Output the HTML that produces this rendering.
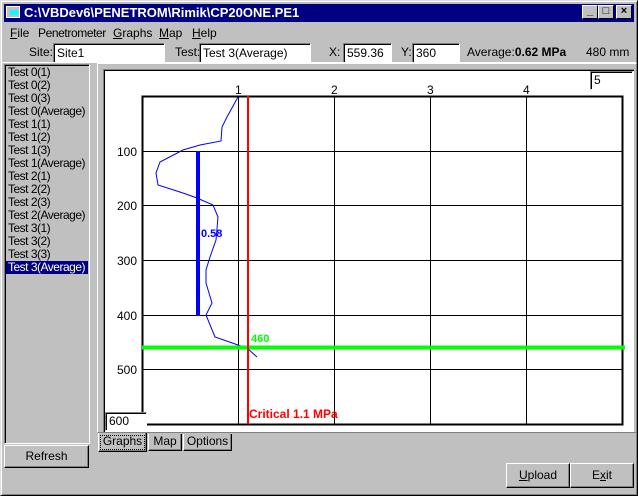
<!DOCTYPE html>
<html><head><style>
*{margin:0;padding:0;box-sizing:border-box}
body{width:638px;height:496px;background:#c0c0c0;font-family:"Liberation Sans",sans-serif;font-size:11px;position:relative;overflow:hidden;color:#000;white-space:nowrap}
.a{position:absolute}
.sunk{border-top:1px solid #808080;border-left:1px solid #808080;border-right:1px solid #fff;border-bottom:1px solid #fff;background:#fff;box-shadow:inset 1px 1px 0 #000;font-size:12px}
.btn{background:#c0c0c0;border-top:1px solid #fff;border-left:1px solid #fff;border-right:1px solid #000;border-bottom:1px solid #000;box-shadow:inset -1px -1px 0 #808080;text-align:center;font-size:12px}
.tb{width:16px;height:14px;top:5px;background:#c0c0c0;border-top:1px solid #fff;border-left:1px solid #fff;border-right:1px solid #000;border-bottom:1px solid #000;font-size:11px;line-height:11px;text-align:center;font-weight:bold}
.li{position:absolute;left:3px;height:13px;line-height:13px;font-size:12px;letter-spacing:-0.5px}
</style></head><body>
<div class="a" style="left:0;top:0;width:638px;height:496px;border-top:1px solid #dfdfdf;border-left:1px solid #dfdfdf;border-right:1px solid #000;border-bottom:1px solid #000;box-shadow:inset 1px 1px 0 #fff,inset -1px -1px 0 #808080"></div>
<div class="a" style="left:4px;top:4px;width:630px;height:18px;background:#000080"></div>
<div class="a" style="left:6px;top:6px;width:14px;height:12px;background:#c0c0c0;border:1px solid #fff"><div style="margin:3px 0 0 3px;width:8px;height:5px;background:#0ff"></div></div>
<div class="a" style="left:24px;top:5px;color:#fff;font-weight:bold;font-size:13px">C:\VBDev6\PENETROM\Rimik\CP20ONE.PE1</div>
<div class="a tb" style="left:582px">_</div><div class="a tb" style="left:598px">□</div><div class="a tb" style="left:616px">×</div>
<div class="a" style="left:10px;top:26px;font-size:12px"><u>F</u>ile</div>
<div class="a" style="left:38px;top:26px;font-size:12px;letter-spacing:-0.4px">Penetrometer</div>
<div class="a" style="left:113px;top:26px;font-size:12px"><u>G</u>raphs</div>
<div class="a" style="left:159px;top:26px;font-size:12px"><u>M</u>ap</div>
<div class="a" style="left:192px;top:26px;font-size:12px"><u>H</u>elp</div>
<div class="a" style="left:29px;top:45px;font-size:12px">Site:</div>
<div class="a sunk" style="left:53px;top:43px;width:112px;height:20px;padding:2px 3px">Site1</div>
<div class="a" style="left:175px;top:45px;font-size:12px">Test:</div>
<div class="a sunk" style="left:199px;top:43px;width:112px;height:20px;padding:2px 3px">Test 3(Average)</div>
<div class="a" style="left:329px;top:45px;font-size:12px">X:</div>
<div class="a sunk" style="left:343px;top:43px;width:49px;height:20px;padding:2px 3px">559.36</div>
<div class="a" style="left:401px;top:45px;font-size:12px">Y:</div>
<div class="a sunk" style="left:412px;top:43px;width:48px;height:20px;padding:2px 3px">360</div>
<div class="a" style="left:467px;top:45px;font-size:12px">Average:<b>0.62 MPa</b></div>
<div class="a" style="left:586px;top:45px;font-size:12px">480 mm</div>
<div class="a" style="left:2px;top:62px;width:634px;height:1px;background:#808080;border-bottom:1px solid #fff"></div>
<div class="a" style="left:4px;top:64px;width:86px;height:380px;border-top:1px solid #808080;border-left:1px solid #808080;border-right:1px solid #fff;border-bottom:1px solid #fff;box-shadow:inset 1px 1px 0 #000;overflow:hidden">
<div class="li" style="top:1px">Test 0(1)</div><div class="li" style="top:14px">Test 0(2)</div><div class="li" style="top:27px">Test 0(3)</div><div class="li" style="top:40px">Test 0(Average)</div>
<div class="li" style="top:53px">Test 1(1)</div><div class="li" style="top:66px">Test 1(2)</div><div class="li" style="top:79px">Test 1(3)</div><div class="li" style="top:92px">Test 1(Average)</div>
<div class="li" style="top:105px">Test 2(1)</div><div class="li" style="top:118px">Test 2(2)</div><div class="li" style="top:131px">Test 2(3)</div><div class="li" style="top:144px">Test 2(Average)</div>
<div class="li" style="top:157px">Test 3(1)</div><div class="li" style="top:170px">Test 3(2)</div><div class="li" style="top:183px">Test 3(3)</div>
<div class="li" style="top:196px;left:1px;padding-left:2px;width:82px;background:#000080;color:#fff">Test 3(Average)</div>
</div>
<div class="a btn" style="left:4px;top:445px;width:85px;height:23px;line-height:21px">Refresh</div>
<div class="a" style="left:97px;top:63px;width:540px;height:370px;border-top:1px solid #fff;border-left:1px solid #fff;border-right:1px solid #808080;border-bottom:1px solid #808080"></div>
<div class="a" style="left:103px;top:69px;width:531px;height:363px;background:#fff;border-top:1px solid #808080;border-left:1px solid #808080;box-shadow:inset 1px 1px 0 #000"></div>
<svg class="a" style="left:0;top:0" width="638" height="496">
<g stroke="#000" stroke-width="1" shape-rendering="crispEdges">
<line x1="238.5" y1="96" x2="238.5" y2="424"/><line x1="334.5" y1="96" x2="334.5" y2="424"/><line x1="430.5" y1="96" x2="430.5" y2="424"/><line x1="526.5" y1="96" x2="526.5" y2="424"/>
<line x1="142" y1="151.5" x2="623" y2="151.5"/><line x1="142" y1="205.5" x2="623" y2="205.5"/><line x1="142" y1="260.5" x2="623" y2="260.5"/><line x1="142" y1="315.5" x2="623" y2="315.5"/><line x1="142" y1="369.5" x2="623" y2="369.5"/>
</g>
<rect x="142.5" y="96.5" width="480" height="328" fill="none" stroke="#000" stroke-width="2"/>
<polyline fill="none" stroke="#00f" stroke-width="1" points="238,97 227,117 222,127 221,141 200,145 183,150 160,162 156,173 158,185 183,193 197,198 213,205 218,217 216,240 210,257 206,270 206,283 212,303 206,315 215,337 238,345 247,348 257,357"/>
<rect x="196" y="151" width="4" height="165" fill="#00f"/>
<rect x="142" y="345.5" width="483" height="4" fill="#0f0"/>
<rect x="247" y="96" width="2" height="328" fill="#f00"/>
<g font-family="Liberation Sans" font-size="12">
<text x="235" y="94">1</text><text x="331" y="94">2</text><text x="427" y="94">3</text><text x="523" y="94">4</text>
<text x="117" y="156">100</text><text x="117" y="210">200</text><text x="117" y="265">300</text><text x="117" y="320">400</text><text x="117" y="374">500</text>
<text x="201" y="237" fill="#00f" font-weight="bold" font-size="11">0.58</text>
<text x="251" y="342" fill="#0f0" font-weight="bold" font-size="11">460</text>
<text x="249" y="418" fill="#f00" font-weight="bold" font-size="12">Critical 1.1 MPa</text>
</g>
</svg>
<div class="a sunk" style="left:590px;top:71px;width:43px;height:19px;padding:1px 3px">5</div>
<div class="a sunk" style="left:105px;top:412px;width:42px;height:19px;padding:1px 3px">600</div>
<div class="a btn" style="left:98px;top:433px;width:49px;height:19px;line-height:17px;border-top:none;outline:1px dotted #000;outline-offset:-3px">Graphs</div>
<div class="a btn" style="left:148px;top:434px;width:34px;height:17px;line-height:15px;border-top:none">Map</div>
<div class="a btn" style="left:183px;top:434px;width:49px;height:17px;line-height:15px;border-top:none">Options</div>
<div class="a btn" style="left:506px;top:463px;width:64px;height:25px;line-height:23px"><u>U</u>pload</div>
<div class="a btn" style="left:570px;top:463px;width:64px;height:25px;line-height:23px">E<u>x</u>it</div>
</body></html>
